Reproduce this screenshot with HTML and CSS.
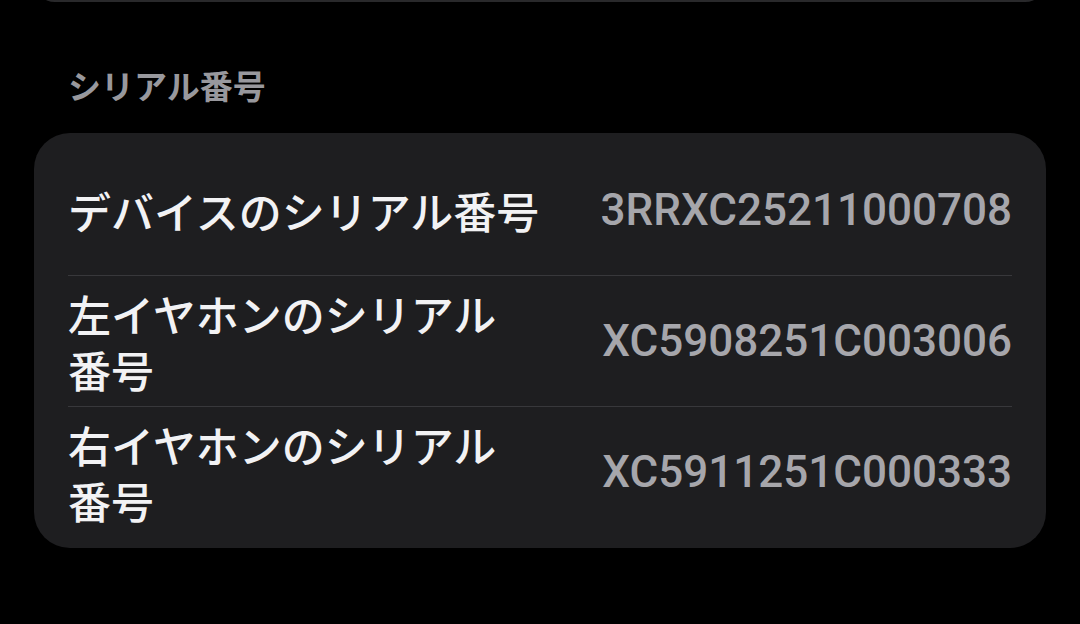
FILE: index.html
```html
<!DOCTYPE html>
<html lang="ja">
<head>
  <meta charset="UTF-8">
  <meta name="viewport" content="width=device-width, initial-scale=1">
  <title>シリアル番号</title>
  <link rel="stylesheet" href="styles.css">
</head>
<body>

<!-- bottom edge of the previous group -->
<div class="group group-prev"></div>

<h2 class="section-title">シリアル番号</h2>

<div class="group">
  <div class="row">
    <div class="row-label">デバイスのシリアル<span class="nowrap">番号</span></div>
    <div class="row-value">3RRXC25211000708</div>
  </div>
  <div class="row">
    <div class="row-label">左イヤホンのシリアル<span class="nowrap">番号</span></div>
    <div class="row-value">XC5908251C003006</div>
  </div>
  <div class="row">
    <div class="row-label">右イヤホンのシリアル<span class="nowrap">番号</span></div>
    <div class="row-value">XC5911251C000333</div>
  </div>
</div>

</body>
</html>
```

FILE: styles.css
```css
/* Global Styles */
body {
  margin: 0;
  background: #000;
  font-family: "Noto Sans CJK JP", "Liberation Sans", sans-serif;
  color: #f2f2f4;
}

.group {
  margin: 0 34px;
  padding: 12px 34px 11px;
  background: #1e1e20;
  border-radius: 36px;
}

.group-prev {
  height: 42px;
  margin-top: -40px;
  padding: 0;
  background: #29292b;
}

.section-title {
  margin: 63px 0 28px 68px;
  font-size: 33px;
  line-height: 40px;
  font-weight: 600;
  color: #98989d;
}

.row {
  display: flex;
  align-items: center;
  justify-content: space-between;
  gap: 24px;
  min-height: 131px;
  box-sizing: border-box;
  border-bottom: 1px solid #38383b;
}

.row:last-child {
  border-bottom: none;
  min-height: 130px;
}

.row-label {
  max-width: 500px;
  font-size: 43px;
  line-height: 56px;
  font-weight: 500;
  color: #f2f2f4;
}

.nowrap {
  white-space: nowrap;
}

.row-value {
  flex-shrink: 0;
  font-family: Roboto, "Liberation Sans", sans-serif;
  font-size: 44px;
  font-weight: 500;
  color: #a6a6ab;
  white-space: nowrap;
}
```
